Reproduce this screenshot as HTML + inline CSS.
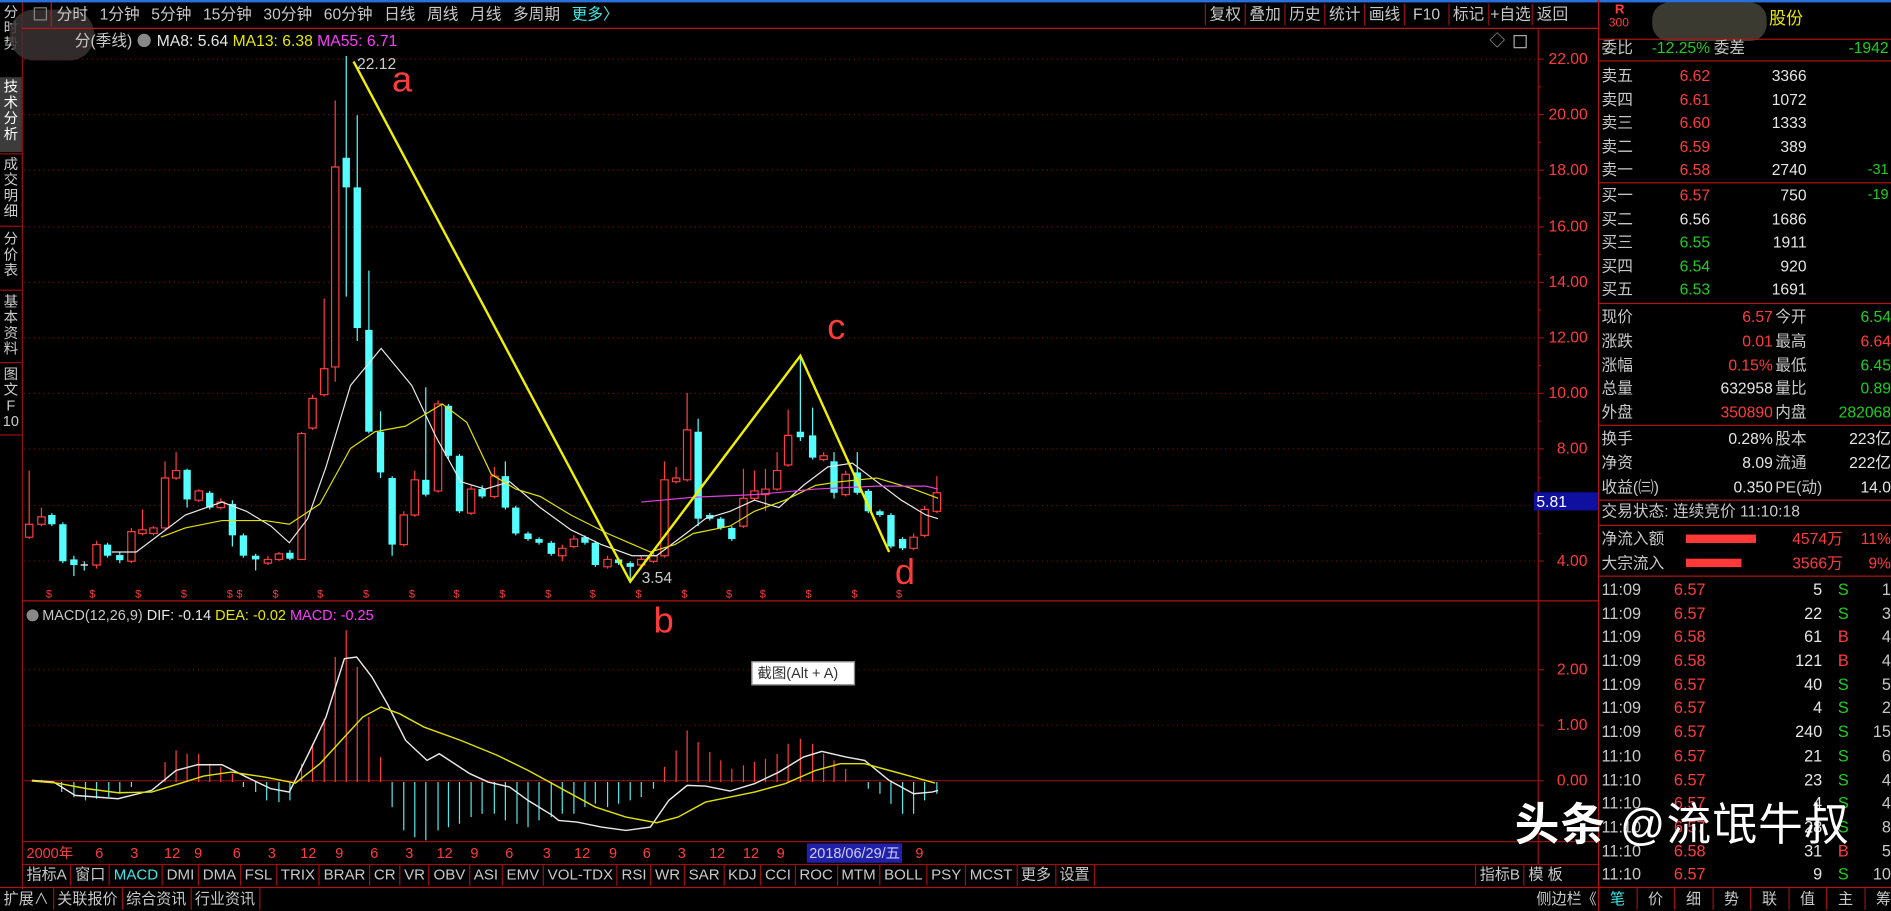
<!DOCTYPE html>
<html><head><meta charset="utf-8">
<style>
*{margin:0;padding:0;box-sizing:border-box}
html,body{width:1891px;height:911px;background:#000;overflow:hidden}
#w{position:absolute;left:0;top:0;width:1568px;height:755px;transform:scale(1.20599,1.20662);transform-origin:0 0;font-family:"Liberation Sans","Noto Sans CJK SC",sans-serif;font-size:13px;color:#c8c8c8}
.a{position:absolute;white-space:nowrap;line-height:16px}
.r{color:#ff3c3c}.g{color:#1fcf1f}.y{color:#e8e800}.m{color:#ff3cff}.c{color:#3ee8e8}.wt{color:#e6e6e6}
.hl{position:absolute;height:1px;background:#9a1010}
.vl{position:absolute;width:1px;background:#9a1010}
.rt{text-align:right}
.tabs span{display:inline-block;padding:0 3px;border-right:1px solid #9a1010;line-height:18px}
.vt{position:absolute;left:1px;width:16px;font-size:12px;line-height:13px;text-align:center;color:#ccc}
</style></head><body><div id="w">
<div style="position:absolute;left:0;top:0;width:1568px;height:2px;background:#2a70dc"></div>
<!-- left vertical strip -->
<div class="vl" style="left:18px;top:2px;height:735px"></div>
<div class="vt" style="top:4px">分<br>时<br>势</div>
<div style="position:absolute;left:0;top:64px;width:18px;height:62px;background:#3c3c3c"></div>
<div class="vt" style="top:66px;color:#fff">技<br>术<br>分<br>析</div>
<div class="hl" style="left:0;top:127px;width:18px"></div>
<div class="vt" style="top:130px">成<br>交<br>明<br>细</div>
<div class="hl" style="left:0;top:187px;width:18px"></div>
<div class="vt" style="top:192px">分<br>价<br>表</div>
<div class="hl" style="left:0;top:240px;width:18px"></div>
<div class="vt" style="top:244px">基<br>本<br>资<br>料</div>
<div class="hl" style="left:0;top:300px;width:18px"></div>
<div class="vt" style="top:304px">图<br>文<br>F<br>10</div>
<div class="hl" style="left:0;top:360px;width:18px"></div>
<!-- blur blob -->
<div style="position:absolute;left:8px;top:8px;width:70px;height:42px;border-radius:20px;background:#3a3234;opacity:.85"></div>
<!-- top toolbar -->
<div class="a" style="left:28px;top:4px;width:11px;height:11px;border:1px solid #888;top:6px"></div>
<div class="vl" style="left:42px;top:2px;height:20px;background:#c01818"></div>
<div class="a" style="left:47px;top:4px;word-spacing:6px">分时 1分钟 5分钟 15分钟 30分钟 60分钟 日线 周线 月线 多周期 <span class="c">更多〉</span></div>
<div class="a tabs" style="left:999px;top:3px;border-left:1px solid #9a1010"><span>复权</span><span>叠加</span><span>历史</span><span>统计</span><span>画线</span><span>&nbsp;F10&nbsp;</span><span>标记</span><span style="padding:0 1px">+自选</span><span style="border:0">返回</span></div>
<div class="hl" style="left:18px;top:23px;width:1307px;background:#c01818"></div>
<!-- ma line -->
<div class="a" style="left:62px;top:26px">分(季线)</div>
<div class="a" style="left:114px;top:28px;width:11px;height:11px;border-radius:50%;background:#888"></div>
<div class="a wt" style="left:130px;top:26px">MA8: 5.64 <span class="y">MA13: 6.38</span> <span class="m">MA55: 6.71</span></div>
<div class="a" style="left:1235px;top:26px;color:#aaa">◇</div>
<div class="a" style="left:1255px;top:29px;width:11px;height:11px;border:1px solid #aaa"></div>
<!-- price axis -->
<div class="vl" style="left:1275px;top:23px;height:693px"></div>
<div class="vl" style="left:1325px;top:0;height:755px;background:#b01414"></div>
<svg style="position:absolute;left:0;top:0" width="1568" height="755">
<g stroke="#6a1010" stroke-dasharray="1 3" stroke-width="1">
<path d="M20 49H1275M20 95H1275M20 141H1275M20 188H1275M20 234H1275M20 280H1275M20 326H1275M20 372H1275M20 419H1275M20 465H1275M20 555H1275M20 601H1275"/>
</g>
<path d="M1275 49h5M1275 95h5M1275 141h5M1275 188h5M1275 234h5M1275 280h5M1275 326h5M1275 372h5M1275 419h5M1275 465h5M1275 555h5M1275 601h5M1275 647h5M1275 72h3M1275 118h3M1275 164h3M1275 211h3M1275 257h3M1275 303h3M1275 349h3M1275 396h3M1275 442h3" stroke="#9a1010"/>
<path d="M20 647H1275" stroke="#8a1010"/>
<path d="M18 498H1325" stroke="#b01414"/>
<g transform="translate(16.6,24.9) scale(0.5075,0.3068)">
<path fill="none" stroke="#ff3c3c" stroke-width="1" vector-effect="non-scaling-stroke" d="M15 1190V1375M35 1290V1340M125 1380V1455M182 1345V1440M200 1295V1365M218 1340V1365M237 1165V1350M255 1140V1215M292 1240V1275M328 1265V1295M405 1420V1445M423 1410V1435M460 1085V1432M478 985V1080M497 725V990M515 190V950M627 1300V1395M645 1190V1315M683 1000V1250M737 1230V1310M775 1180V1265M886 1390V1435M905 1365V1400M960 1420V1455M1015 1420V1450M1035 1410V1440M1053 1165V1425M1072 1180V1225M1090 980V1220M1182 1185V1345M1200 1190V1270M1218 1185V1300M1237 1140V1245M1255 1025V1180M1313 1140V1165M1349 1190V1260M1460 1360V1405M1478 1285V1370M1498 1205V1305"/>
<g fill="#000" stroke="#ff3c3c" stroke-width="1" vector-effect="non-scaling-stroke">
<rect x="9" y="1335" width="12" height="35" vector-effect="non-scaling-stroke"/><rect x="29" y="1315" width="12" height="20" vector-effect="non-scaling-stroke"/><rect x="119" y="1390" width="12" height="55" vector-effect="non-scaling-stroke"/><rect x="176" y="1355" width="12" height="80" vector-effect="non-scaling-stroke"/><rect x="194" y="1350" width="12" height="10" vector-effect="non-scaling-stroke"/><rect x="212" y="1345" width="12" height="15" vector-effect="non-scaling-stroke"/><rect x="231" y="1210" width="12" height="135" vector-effect="non-scaling-stroke"/><rect x="249" y="1190" width="12" height="20" vector-effect="non-scaling-stroke"/><rect x="286" y="1245" width="12" height="25" vector-effect="non-scaling-stroke"/><rect x="322" y="1275" width="12" height="15" vector-effect="non-scaling-stroke"/><rect x="399" y="1430" width="12" height="10" vector-effect="non-scaling-stroke"/><rect x="417" y="1415" width="12" height="15" vector-effect="non-scaling-stroke"/><rect x="454" y="1090" width="12" height="340" vector-effect="non-scaling-stroke"/><rect x="472" y="995" width="12" height="80" vector-effect="non-scaling-stroke"/><rect x="491" y="915" width="12" height="70" vector-effect="non-scaling-stroke"/><rect x="509" y="370" width="12" height="540" vector-effect="non-scaling-stroke"/><rect x="621" y="1310" width="12" height="80" vector-effect="non-scaling-stroke"/><rect x="639" y="1215" width="12" height="95" vector-effect="non-scaling-stroke"/><rect x="677" y="1010" width="12" height="235" vector-effect="non-scaling-stroke"/><rect x="731" y="1240" width="12" height="65" vector-effect="non-scaling-stroke"/><rect x="769" y="1205" width="12" height="55" vector-effect="non-scaling-stroke"/><rect x="880" y="1400" width="12" height="20" vector-effect="non-scaling-stroke"/><rect x="899" y="1375" width="12" height="20" vector-effect="non-scaling-stroke"/><rect x="954" y="1430" width="12" height="20" vector-effect="non-scaling-stroke"/><rect x="1009" y="1430" width="12" height="15" vector-effect="non-scaling-stroke"/><rect x="1029" y="1420" width="12" height="15" vector-effect="non-scaling-stroke"/><rect x="1047" y="1215" width="12" height="205" vector-effect="non-scaling-stroke"/><rect x="1066" y="1210" width="12" height="10" vector-effect="non-scaling-stroke"/><rect x="1084" y="1080" width="12" height="135" vector-effect="non-scaling-stroke"/><rect x="1176" y="1265" width="12" height="75" vector-effect="non-scaling-stroke"/><rect x="1194" y="1245" width="12" height="20" vector-effect="non-scaling-stroke"/><rect x="1212" y="1240" width="12" height="15" vector-effect="non-scaling-stroke"/><rect x="1231" y="1190" width="12" height="50" vector-effect="non-scaling-stroke"/><rect x="1249" y="1095" width="12" height="80" vector-effect="non-scaling-stroke"/><rect x="1307" y="1150" width="12" height="10" vector-effect="non-scaling-stroke"/><rect x="1343" y="1200" width="12" height="55" vector-effect="non-scaling-stroke"/><rect x="1454" y="1370" width="12" height="30" vector-effect="non-scaling-stroke"/><rect x="1472" y="1295" width="12" height="70" vector-effect="non-scaling-stroke"/><rect x="1492" y="1250" width="12" height="50" vector-effect="non-scaling-stroke"/>
</g>
<path fill="none" stroke="#54ffff" stroke-width="1" vector-effect="non-scaling-stroke" d="M52 1305V1340M70 1330V1440M88 1420V1475M105 1435V1460M143 1385V1425M163 1410V1440M273 1185V1290M310 1245V1295M347 1270V1395M365 1360V1425M385 1415V1460M441 1405V1432M533 70V720M551 230V840M570 650V1090M589 1030V1210M608 1205V1420M663 965V1260M700 1010V1160M718 1145V1305M755 1230V1265M793 1165V1295M810 1285V1365M830 1355V1380M848 1370V1390M868 1380V1420M923 1365V1390M940 1380V1450M978 1425V1445M997 1435V1490M1108 1050V1340M1127 1305V1325M1145 1315V1350M1163 1340V1380M1275 880V1110M1295 1020V1160M1330 1140V1265M1368 1140V1255M1386 1240V1305M1405 1295V1315M1423 1305V1400M1442 1370V1405"/>
<g fill="#54ffff">
<rect x="46" y="1310" width="12" height="25"/><rect x="64" y="1335" width="12" height="100"/><rect x="82" y="1430" width="12" height="15"/><rect x="99" y="1443" width="12" height="4" fill="#ddd"/><rect x="137" y="1390" width="12" height="30"/><rect x="157" y="1418" width="12" height="14"/><rect x="267" y="1188" width="12" height="80"/><rect x="304" y="1250" width="12" height="40"/><rect x="341" y="1280" width="12" height="85"/><rect x="359" y="1365" width="12" height="55"/><rect x="379" y="1420" width="12" height="10"/><rect x="435" y="1412" width="12" height="16"/><rect x="527" y="345" width="12" height="80"/><rect x="545" y="425" width="12" height="380"/><rect x="564" y="810" width="12" height="275"/><rect x="583" y="1085" width="12" height="110"/><rect x="602" y="1210" width="12" height="180"/><rect x="657" y="1215" width="12" height="40"/><rect x="694" y="1015" width="12" height="135"/><rect x="712" y="1150" width="12" height="150"/><rect x="749" y="1240" width="12" height="20"/><rect x="787" y="1205" width="12" height="85"/><rect x="804" y="1290" width="12" height="70"/><rect x="824" y="1360" width="12" height="15"/><rect x="842" y="1375" width="12" height="10"/><rect x="862" y="1385" width="12" height="30"/><rect x="917" y="1370" width="12" height="15"/><rect x="934" y="1385" width="12" height="60"/><rect x="972" y="1430" width="12" height="10"/><rect x="991" y="1440" width="12" height="10"/><rect x="1102" y="1085" width="12" height="235"/><rect x="1121" y="1310" width="12" height="10"/><rect x="1139" y="1320" width="12" height="25"/><rect x="1157" y="1345" width="12" height="30"/><rect x="1269" y="1085" width="12" height="15"/><rect x="1289" y="1095" width="12" height="60"/><rect x="1324" y="1165" width="12" height="85"/><rect x="1362" y="1195" width="12" height="55"/><rect x="1380" y="1245" width="12" height="55"/><rect x="1399" y="1300" width="12" height="10"/><rect x="1417" y="1310" width="12" height="85"/><rect x="1436" y="1375" width="12" height="25"/>
</g>
<g fill="none" stroke-width="1" vector-effect="non-scaling-stroke">
<path stroke="#e8e8e8" vector-effect="non-scaling-stroke" d="M150 1410L190 1410L230 1360L270 1310L330 1275L370 1300L410 1340L440 1385L470 1320L500 1180L540 960L590 860L640 960L680 1100L720 1220L760 1240L800 1220L850 1290L900 1350L950 1390L1000 1420L1040 1420L1080 1370L1120 1320L1160 1300L1200 1270L1240 1290L1280 1230L1320 1180L1360 1170L1400 1220L1440 1270L1480 1310L1500 1320"/>
<path stroke="#e0e000" vector-effect="non-scaling-stroke" d="M230 1370L270 1345L330 1325L400 1325L440 1335L490 1280L540 1130L580 1085L630 1070L690 1010L730 1060L770 1200L810 1240L850 1260L900 1310L960 1360L1030 1410L1070 1390L1100 1360L1160 1340L1200 1300L1250 1270L1300 1230L1340 1220L1400 1210L1460 1240L1500 1265"/>
<path stroke="#e040e0" vector-effect="non-scaling-stroke" d="M1015 1275L1100 1262L1200 1255L1300 1240L1400 1232L1480 1232L1500 1240"/>
<path stroke="#f0f000" stroke-width="2" vector-effect="non-scaling-stroke" d="M545 85L997 1490L1275 880L1420 1410"/>
</g>
</g>
<!-- MACD -->
<g transform="translate(16.6,497.5) scale(0.5075,0.2764)" fill="none">
<path stroke="#ff3c3c" stroke-width="1" vector-effect="non-scaling-stroke" d="M237 545V485M255 545V450M273 545V460M292 545V460M310 545V490M328 545V500M347 545V520M460 545V490M478 545V430M497 545V355M515 545V170M533 545V90M551 545V200M570 545V350M589 545V470M1053 545V500M1072 545V450M1090 545V390M1108 545V425M1127 545V455M1145 545V480M1163 545V505M1182 545V495M1200 545V485M1218 545V475M1237 545V460M1255 545V430M1275 545V415M1295 545V430M1313 545V460M1330 545V480M1349 545V505M20 545V538M35 545V538"/>
<path stroke="#54e8e8" stroke-width="1" vector-effect="non-scaling-stroke" d="M68 545V575M88 545V590M107 545V600M125 545V595M145 545V590M163 545V580M182 545V560M365 545V560M385 545V575M403 545V600M423 545V605M441 545V600M608 545V620M627 545V690M645 545V710M663 545V720M683 545V690M700 545V680M718 545V670M737 545V650M755 545V640M775 545V640M793 545V660M812 545V670M830 545V680M848 545V660M868 545V650M886 545V640M905 545V640M923 545V620M940 545V610M960 545V620M978 545V610M997 545V600M1015 545V590M1035 545V565M1386 545V565M1405 545V580M1423 545V610M1442 545V640M1460 545V640M1478 545V600M1498 545V580"/>
<path stroke="#e8e8e8" stroke-width="1.2" vector-effect="non-scaling-stroke" d="M20 540L55 545L90 585L160 595L215 570L255 510L290 493L330 493L370 530L410 565L440 575L470 465L500 350L530 175L550 170L575 230L600 310L630 420L665 480L685 460L710 490L735 520L765 545L800 560L830 600L870 645L880 660L910 665L950 680L990 690L1030 680L1060 600L1090 555L1120 557L1160 572L1200 550L1240 515L1280 470L1310 453L1350 470L1380 480L1420 540L1460 580L1490 575L1500 570"/>
<path stroke="#e0e000" stroke-width="1.2" vector-effect="non-scaling-stroke" d="M20 542L60 548L110 565L160 577L215 575L260 550L300 527L345 515L400 530L450 548L490 490L530 410L560 350L590 320L620 340L660 380L720 420L780 465L830 510L880 560L940 620L990 650L1040 667L1075 650L1120 605L1160 590L1200 575L1250 550L1300 510L1340 490L1380 490L1420 510L1460 530L1495 548"/>
</g>
</svg>
<!-- axis labels -->
<div class="a r" style="left:1284px;top:41px">22.00</div>
<div class="a r" style="left:1284px;top:87px">20.00</div>
<div class="a r" style="left:1284px;top:133px">18.00</div>
<div class="a r" style="left:1284px;top:180px">16.00</div>
<div class="a r" style="left:1284px;top:226px">14.00</div>
<div class="a r" style="left:1284px;top:272px">12.00</div>
<div class="a r" style="left:1284px;top:318px">10.00</div>
<div class="a r" style="left:1291px;top:364px">8.00</div>
<div class="a r" style="left:1291px;top:457px">4.00</div>
<div class="a" style="left:1272px;top:408px;width:53px;height:15px;background:#1010a0;color:#fff;padding-left:2px;line-height:15px">5.81</div>
<div class="a r" style="left:1291px;top:547px">2.00</div>
<div class="a r" style="left:1291px;top:593px">1.00</div>
<div class="a r" style="left:1291px;top:639px">0.00</div>
<!-- chart labels -->
<div class="a" style="left:296px;top:45px;color:#ccc">22.12</div>
<div class="a" style="left:532px;top:471px;color:#ccc">3.54</div>
<div class="a r" style="left:325px;top:50px;font-size:30px;line-height:34px">a</div>
<div class="a r" style="left:542px;top:498px;font-size:30px;line-height:34px">b</div>
<div class="a r" style="left:686px;top:255px;font-size:30px;line-height:34px">c</div>
<div class="a r" style="left:742px;top:458px;font-size:30px;line-height:34px">d</div>
<div class="a r" style="left:0;top:484px;font-size:9px;width:1300px">
<span style="position:absolute;left:38px">$</span><span style="position:absolute;left:74px">$</span><span style="position:absolute;left:112px">$</span><span style="position:absolute;left:150px">$</span><span style="position:absolute;left:188px">$</span><span style="position:absolute;left:196px">$</span><span style="position:absolute;left:226px">$</span><span style="position:absolute;left:263px">$</span><span style="position:absolute;left:301px">$</span><span style="position:absolute;left:339px">$</span><span style="position:absolute;left:376px">$</span><span style="position:absolute;left:414px">$</span><span style="position:absolute;left:452px">$</span><span style="position:absolute;left:489px">$</span><span style="position:absolute;left:527px">$</span><span style="position:absolute;left:565px">$</span><span style="position:absolute;left:602px">$</span><span style="position:absolute;left:630px">$</span><span style="position:absolute;left:668px">$</span><span style="position:absolute;left:706px">$</span><span style="position:absolute;left:743px">$</span></div>
<div class="a" style="left:22px;top:503px;width:10px;height:10px;border-radius:50%;background:#888;top:505px"></div>
<div class="a" style="left:35px;top:502px;font-size:12px">MACD(12,26,9) <span class="wt">DIF: -0.14</span> <span class="y">DEA: -0.02</span> <span class="m">MACD: -0.25</span></div>
<div class="a" style="left:623px;top:548px;width:86px;height:20px;background:#fff;color:#333;border:1px solid #888;line-height:18px;padding-left:4px;font-size:12px">截图(Alt + A)</div>
<!-- date axis -->
<div class="hl" style="left:18px;top:697px;width:1307px"></div>
<div class="a r" style="left:22px;top:699px;font-size:12px;width:800px">
<span>2000年</span><span style="position:absolute;left:57px">6</span><span style="position:absolute;left:86px">3</span><span style="position:absolute;left:114px">12</span><span style="position:absolute;left:139px">9</span><span style="position:absolute;left:171px">6</span><span style="position:absolute;left:200px">3</span><span style="position:absolute;left:227px">12</span><span style="position:absolute;left:256px">9</span><span style="position:absolute;left:285px">6</span><span style="position:absolute;left:314px">3</span><span style="position:absolute;left:340px">12</span><span style="position:absolute;left:368px">9</span><span style="position:absolute;left:397px">6</span><span style="position:absolute;left:428px">3</span><span style="position:absolute;left:454px">12</span><span style="position:absolute;left:483px">9</span><span style="position:absolute;left:511px">6</span><span style="position:absolute;left:540px">3</span><span style="position:absolute;left:566px">12</span><span style="position:absolute;left:594px">12</span><span style="position:absolute;left:622px">9</span><span style="position:absolute;left:647px;background:#2020a8;color:#ccf;padding:0 2px">2018/06/29/五</span><span style="position:absolute;left:737px">9</span></div>
<div class="hl" style="left:18px;top:716px;width:1307px"></div>
<div class="a tabs" style="left:19px;top:716px;font-size:12.5px"><span>指标A</span><span>窗口</span><span class="c">MACD</span><span>DMI</span><span>DMA</span><span>FSL</span><span>TRIX</span><span>BRAR</span><span>CR</span><span>VR</span><span>OBV</span><span>ASI</span><span>EMV</span><span>VOL-TDX</span><span>RSI</span><span>WR</span><span>SAR</span><span>KDJ</span><span>CCI</span><span>ROC</span><span>MTM</span><span>BOLL</span><span>PSY</span><span>MCST</span><span>更多</span><span>设置</span></div>
<div class="a tabs" style="left:1223px;top:716px;font-size:12.5px;border-left:1px solid #9a1010"><span>指标B</span><span style="border:0">模 板</span></div>
<div class="hl" style="left:0;top:735px;width:1568px;background:#b01414"></div>
<div class="a tabs" style="left:0;top:736px;font-size:12.5px"><span>扩展∧</span><span>关联报价</span><span>综合资讯</span><span>行业资讯</span></div>
<div class="a" style="left:1274px;top:737px;font-size:12.5px">侧边栏《</div>
<div class="a tabs" style="left:1326px;top:736px;font-size:12.5px;word-spacing:0"><span class="c" style="padding:0 9px">笔</span><span style="padding:0 9px">价</span><span style="padding:0 9px">细</span><span style="padding:0 9px">势</span><span style="padding:0 9px">联</span><span style="padding:0 9px">值</span><span style="padding:0 9px">主</span><span style="padding:0 9px;border:0">筹</span></div>
<!-- right panel -->
<div class="a r" style="left:1339px;top:2px;font-size:11px;font-weight:bold;line-height:12px">R</div>
<div class="a r" style="left:1334px;top:14px;font-size:10px;line-height:12px">300</div>
<div style="position:absolute;left:1370px;top:2px;width:95px;height:32px;border-radius:14px;background:#3a3a30"></div>
<div class="a y" style="left:1467px;top:7px;font-size:14px">股份</div>
<div class="hl" style="left:1325px;top:32px;width:243px;background:#b01414"></div>
<div class="a" style="left:1328px;top:32px;width:240px"><span>委比</span><span class="g" style="position:absolute;right:150px">-12.25%</span><span style="position:absolute;left:93px">委差</span><span class="g" style="position:absolute;right:2px">-1942</span></div>
<div class="hl" style="left:1325px;top:50px;width:243px;background:#b01414"></div>
<div id="ob" style="position:absolute;left:1328px;top:53px;width:240px;line-height:19.6px">
<div style="position:relative;height:19.6px">卖五<span class="r" style="position:absolute;right:150px">6.62</span><span class="wt" style="position:absolute;right:70px">3366</span></div>
<div style="position:relative;height:19.6px">卖四<span class="r" style="position:absolute;right:150px">6.61</span><span class="wt" style="position:absolute;right:70px">1072</span></div>
<div style="position:relative;height:19.6px">卖三<span class="r" style="position:absolute;right:150px">6.60</span><span class="wt" style="position:absolute;right:70px">1333</span></div>
<div style="position:relative;height:19.6px">卖二<span class="r" style="position:absolute;right:150px">6.59</span><span class="wt" style="position:absolute;right:70px">389</span></div>
<div style="position:relative;height:19.6px">卖一<span class="r" style="position:absolute;right:150px">6.58</span><span class="wt" style="position:absolute;right:70px">2740</span><span class="g" style="position:absolute;right:2px;font-size:12px">-31</span></div>
</div>
<div class="hl" style="left:1325px;top:151px;width:243px;background:#b01414"></div>
<div style="position:absolute;left:1328px;top:152px;width:240px;line-height:19.6px">
<div style="position:relative;height:19.6px">买一<span class="r" style="position:absolute;right:150px">6.57</span><span class="wt" style="position:absolute;right:70px">750</span><span class="g" style="position:absolute;right:2px;font-size:12px">-19</span></div>
<div style="position:relative;height:19.6px">买二<span class="wt" style="position:absolute;right:150px">6.56</span><span class="wt" style="position:absolute;right:70px">1686</span></div>
<div style="position:relative;height:19.6px">买三<span class="g" style="position:absolute;right:150px">6.55</span><span class="wt" style="position:absolute;right:70px">1911</span></div>
<div style="position:relative;height:19.6px">买四<span class="g" style="position:absolute;right:150px">6.54</span><span class="wt" style="position:absolute;right:70px">920</span></div>
<div style="position:relative;height:19.6px">买五<span class="g" style="position:absolute;right:150px">6.53</span><span class="wt" style="position:absolute;right:70px">1691</span></div>
</div>
<div class="hl" style="left:1325px;top:251px;width:243px;background:#b01414"></div>
<div style="position:absolute;left:1328px;top:253px;width:240px;line-height:19.8px">
<div style="position:relative;height:19.8px">现价<span class="r" style="position:absolute;right:98px">6.57</span><span style="position:absolute;left:144px">今开</span><span class="g" style="position:absolute;right:0">6.54</span></div>
<div style="position:relative;height:19.8px">涨跌<span class="r" style="position:absolute;right:98px">0.01</span><span style="position:absolute;left:144px">最高</span><span class="r" style="position:absolute;right:0">6.64</span></div>
<div style="position:relative;height:19.8px">涨幅<span class="r" style="position:absolute;right:98px">0.15%</span><span style="position:absolute;left:144px">最低</span><span class="g" style="position:absolute;right:0">6.45</span></div>
<div style="position:relative;height:19.8px">总量<span class="wt" style="position:absolute;right:98px">632958</span><span style="position:absolute;left:144px">量比</span><span class="g" style="position:absolute;right:0">0.89</span></div>
<div style="position:relative;height:19.8px">外盘<span class="r" style="position:absolute;right:98px">350890</span><span style="position:absolute;left:144px">内盘</span><span class="g" style="position:absolute;right:0">282068</span></div>
</div>
<div class="hl" style="left:1325px;top:352px;width:243px;background:#b01414"></div>
<div style="position:absolute;left:1328px;top:354px;width:240px;line-height:19.8px">
<div style="position:relative;height:19.8px">换手<span class="wt" style="position:absolute;right:98px">0.28%</span><span style="position:absolute;left:144px">股本</span><span class="wt" style="position:absolute;right:0">223亿</span></div>
<div style="position:relative;height:19.8px">净资<span class="wt" style="position:absolute;right:98px">8.09</span><span style="position:absolute;left:144px">流通</span><span class="wt" style="position:absolute;right:0">222亿</span></div>
<div style="position:relative;height:19.8px">收益(㈢)<span class="wt" style="position:absolute;right:98px">0.350</span><span style="position:absolute;left:144px">PE(动)</span><span class="wt" style="position:absolute;right:0">14.0</span></div>
</div>
<div class="hl" style="left:1325px;top:414px;width:243px;background:#b01414"></div>
<div class="a" style="left:1328px;top:416px">交易状态: 连续竞价 11:10:18</div>
<div class="hl" style="left:1325px;top:435px;width:243px;background:#b01414"></div>
<div style="position:absolute;left:1328px;top:437px;width:240px;line-height:20px">
<div style="position:relative;height:20px">净流入额<span style="position:absolute;left:70px;top:6px;width:58px;height:7px;background:#ff3838"></span><span class="r" style="position:absolute;right:40px">4574万</span><span class="r" style="position:absolute;right:0">11%</span></div>
<div style="position:relative;height:20px">大宗流入<span style="position:absolute;left:70px;top:6px;width:46px;height:7px;background:#ff3838"></span><span class="r" style="position:absolute;right:40px">3566万</span><span class="r" style="position:absolute;right:0">9%</span></div>
</div>
<div class="hl" style="left:1325px;top:477px;width:243px;background:#b01414"></div>
<div style="position:absolute;left:1328px;top:479px;width:240px;line-height:19.7px;font-size:13.5px">
<div style="position:relative;height:19.7px">11:09<span class="r" style="position:absolute;left:60px">6.57</span><span class="wt" style="position:absolute;right:57px">5</span><span class="g" style="position:absolute;left:196px">S</span><span style="position:absolute;right:0">1</span></div>
<div style="position:relative;height:19.7px">11:09<span class="r" style="position:absolute;left:60px">6.57</span><span class="wt" style="position:absolute;right:57px">22</span><span class="g" style="position:absolute;left:196px">S</span><span style="position:absolute;right:0">3</span></div>
<div style="position:relative;height:19.7px">11:09<span class="r" style="position:absolute;left:60px">6.58</span><span class="wt" style="position:absolute;right:57px">61</span><span class="r" style="position:absolute;left:196px">B</span><span style="position:absolute;right:0">4</span></div>
<div style="position:relative;height:19.7px">11:09<span class="r" style="position:absolute;left:60px">6.58</span><span class="wt" style="position:absolute;right:57px">121</span><span class="r" style="position:absolute;left:196px">B</span><span style="position:absolute;right:0">4</span></div>
<div style="position:relative;height:19.7px">11:09<span class="r" style="position:absolute;left:60px">6.57</span><span class="wt" style="position:absolute;right:57px">40</span><span class="g" style="position:absolute;left:196px">S</span><span style="position:absolute;right:0">5</span></div>
<div style="position:relative;height:19.7px">11:09<span class="r" style="position:absolute;left:60px">6.57</span><span class="wt" style="position:absolute;right:57px">4</span><span class="g" style="position:absolute;left:196px">S</span><span style="position:absolute;right:0">2</span></div>
<div style="position:relative;height:19.7px">11:09<span class="r" style="position:absolute;left:60px">6.57</span><span class="wt" style="position:absolute;right:57px">240</span><span class="g" style="position:absolute;left:196px">S</span><span style="position:absolute;right:0">15</span></div>
<div style="position:relative;height:19.7px">11:10<span class="r" style="position:absolute;left:60px">6.57</span><span class="wt" style="position:absolute;right:57px">21</span><span class="g" style="position:absolute;left:196px">S</span><span style="position:absolute;right:0">6</span></div>
<div style="position:relative;height:19.7px">11:10<span class="r" style="position:absolute;left:60px">6.57</span><span class="wt" style="position:absolute;right:57px">23</span><span class="g" style="position:absolute;left:196px">S</span><span style="position:absolute;right:0">4</span></div>
<div style="position:relative;height:19.7px">11:10<span class="r" style="position:absolute;left:60px">6.57</span><span class="wt" style="position:absolute;right:57px">4</span><span class="g" style="position:absolute;left:196px">S</span><span style="position:absolute;right:0">4</span></div>
<div style="position:relative;height:19.7px">11:10<span class="r" style="position:absolute;left:60px">6.57</span><span class="wt" style="position:absolute;right:57px">28</span><span class="g" style="position:absolute;left:196px">S</span><span style="position:absolute;right:0">8</span></div>
<div style="position:relative;height:19.7px">11:10<span class="r" style="position:absolute;left:60px">6.58</span><span class="wt" style="position:absolute;right:57px">31</span><span class="r" style="position:absolute;left:196px">B</span><span style="position:absolute;right:0">5</span></div>
<div style="position:relative;height:19.7px">11:10<span class="r" style="position:absolute;left:60px">6.57</span><span class="wt" style="position:absolute;right:57px">9</span><span class="g" style="position:absolute;left:196px">S</span><span style="position:absolute;right:0">10</span></div>
</div>
<!-- watermark -->
<div class="a" style="left:1256px;top:662px;font-size:37px;line-height:44px;color:#fff;font-weight:bold;letter-spacing:1px">头条 <span style="font-weight:normal">@流氓牛叔</span></div>
</div></body></html>
